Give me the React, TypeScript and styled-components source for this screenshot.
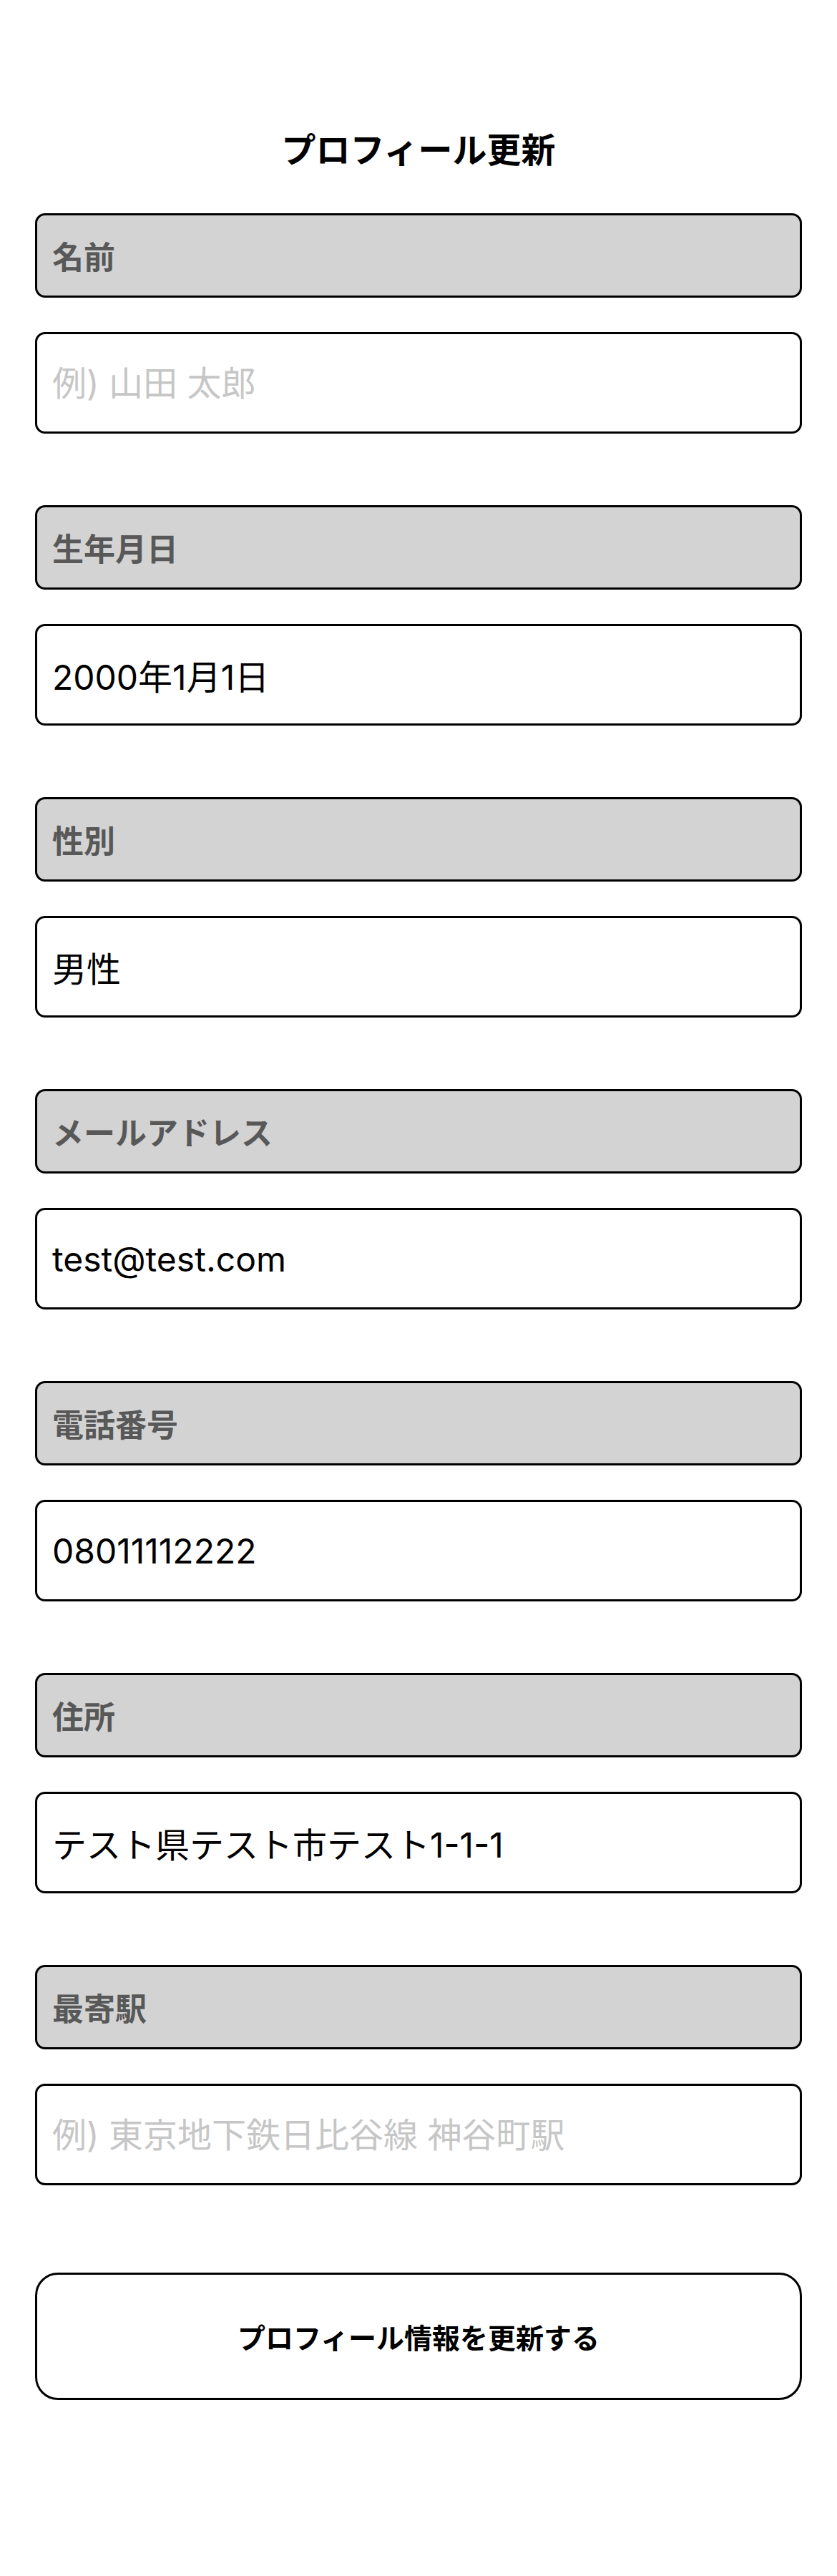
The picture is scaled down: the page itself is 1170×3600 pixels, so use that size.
import React from 'react'
import styled, { createGlobalStyle } from 'styled-components'

const fields = [
  { label: '名前', value: '', placeholder: '例) 山田 太郎' },
  { label: '生年月日', value: '2000年1月1日', placeholder: '' },
  { label: '性別', value: '男性', placeholder: '' },
  { label: 'メールアドレス', value: 'test@test.com', placeholder: '' },
  { label: '電話番号', value: '08011112222', placeholder: '' },
  { label: '住所', value: 'テスト県テスト市テスト1-1-1', placeholder: '' },
  { label: '最寄駅', value: '', placeholder: '例) 東京地下鉄日比谷線 神谷町駅' },
];

export default function App() {
  return (
    <>
      <GlobalStyle />
      <ProfileContainer>
        <h1>プロフィール更新</h1>
        <FieldList>
          {
            fields.map(({ label, value, placeholder }) => (
              <FieldItem key={label}>
                <FieldLabel>{ label }</FieldLabel>
                <FieldInput
                  type='text'
                  defaultValue={value}
                  placeholder={placeholder}
                  readOnly
                />
              </FieldItem>
            ))
          }
        </FieldList>
        <SubmitButton type='button'>プロフィール情報を更新する</SubmitButton>
      </ProfileContainer>
    </>
  )
}

// styled components
const GlobalStyle = createGlobalStyle`
  * {box-sizing: border-box;}
  html, body {
    margin: 0px;
    padding: 0px;
    background-color: #ffffff;
  }
  body {
    font-family: 'Inter', 'Noto Sans CJK JP', sans-serif;
    color: #000000;
  }
`;

const ProfileContainer = styled.div`
  display: flex;
  flex-flow: column nowrap;
  width: 100%;
  min-height: 3600px;
  padding: 170px 49px 0px;

  & > h1 {
    display: block;
    width: 100%;
    height: 72px;
    margin: 0px 0px 56px;
    font-family: 'Noto Sans CJK JP', sans-serif;
    font-size: 48px;
    font-weight: 700;
    line-height: 72px;
    text-align: center;
    color: #000000;
  }
`;

const FieldList = styled.div`
  display: flex;
  flex-flow: column nowrap;
  gap: 100px;
  width: 100%;
`;

const FieldItem = styled.div`
  display: flex;
  flex-flow: column nowrap;
  gap: 48px;
  width: 100%;
`;

const FieldLabel = styled.div`
  display: flex;
  align-items: center;
  width: 100%;
  height: 118px;
  padding: 0px 21px;
  border: 3px solid #000000;
  border-radius: 14px;
  background-color: #d3d3d3;
  font-family: 'Noto Sans CJK JP', sans-serif;
  font-size: 44px;
  font-weight: 700;
  color: #585858;
  white-space: nowrap;
`;

const FieldInput = styled.input`
  display: block;
  width: 100%;
  height: 142px;
  margin: 0px;
  padding: 0px 21px;
  border: 3px solid #000000;
  border-radius: 14px;
  background-color: #ffffff;
  font-family: 'Inter', 'Noto Sans CJK JP', sans-serif;
  font-size: 48px;
  font-weight: 400;
  color: #000000;
  outline: none;

  &::placeholder {color: #c6c6c6;}
`;

const SubmitButton = styled.button`
  display: flex;
  justify-content: center;
  align-items: center;
  width: 100%;
  height: 178px;
  margin: 122px 0px 0px;
  padding: 0px;
  border: 3px solid #000000;
  border-radius: 32px;
  background-color: #ffffff;
  font-family: 'Noto Sans CJK JP', sans-serif;
  font-size: 39px;
  font-weight: 700;
  color: #000000;
  cursor: pointer;
`;
